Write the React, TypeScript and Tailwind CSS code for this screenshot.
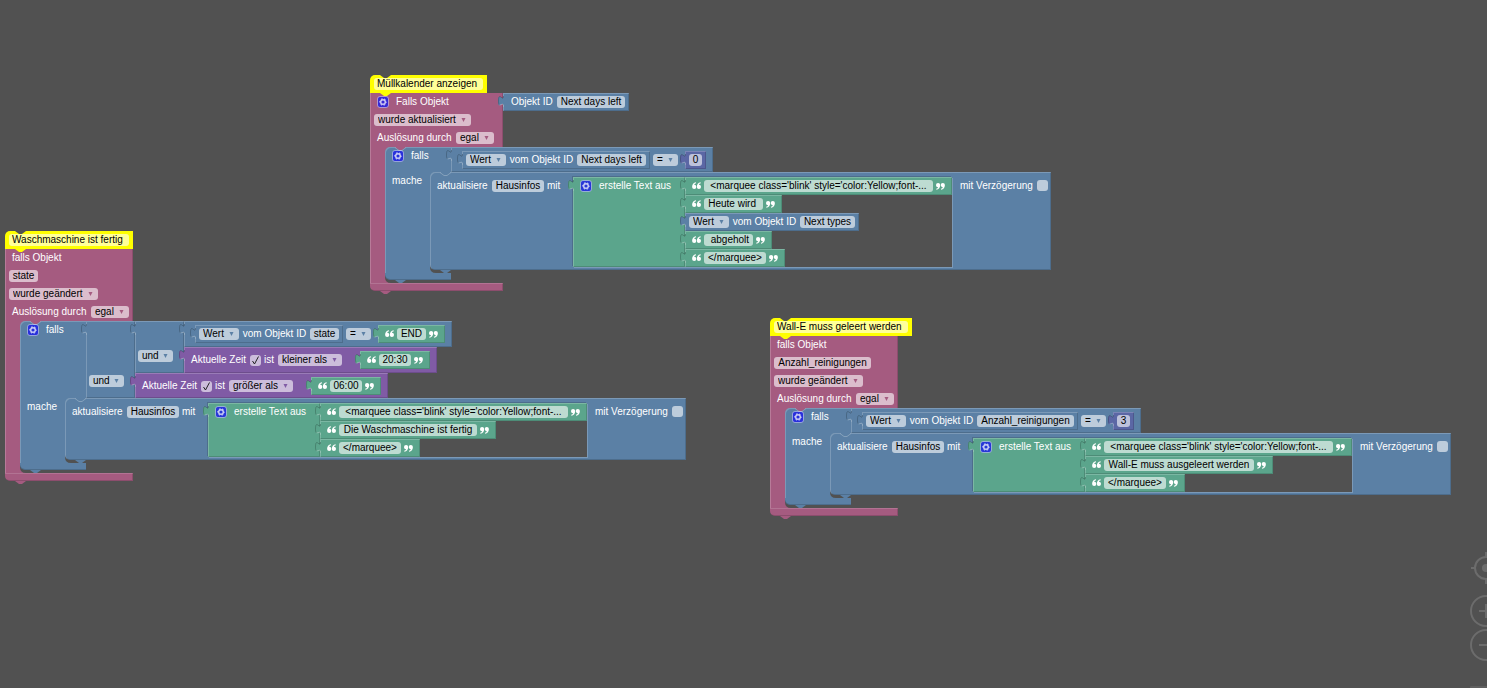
import type { ReactNode } from "react";
import { twMerge } from "tailwind-merge";

type Tone = "yellow" | "pink" | "blue" | "green" | "purple" | "indigo";

const bg: Record<Tone, string> = {
  yellow: "bg-[#ffff00]",
  pink: "bg-[#a55b80]",
  blue: "bg-[#5b80a5]",
  green: "bg-[#5ba58c]",
  purple: "bg-[#805ba5]",
  indigo: "bg-[#5b67a5]",
};

const fill: Record<Tone, string> = {
  yellow: "fill-[#ffff00]",
  pink: "fill-[#a55b80]",
  blue: "fill-[#5b80a5]",
  green: "fill-[#5ba58c]",
  purple: "fill-[#805ba5]",
  indigo: "fill-[#5b67a5]",
};

const bevel = "shadow-[inset_1px_1px_#ffffff33,inset_-1px_-1px_#00000026]";

/* shapes */

const Tab = ({ tone }: { tone: Tone }) => (
  <svg className="absolute top-[3px] -left-[5px] h-[11px] w-[7px]" viewBox="0 0 7 11">
    <path className={fill[tone]} d="M7 0H5.5c0 6.800-5.500-5.500-5.500 5.100s5.500-1.700 5.500 5.100H7z" />
    <path
      d="M5.500 0c0 6.800-5-5.500-5 5.100 0 2 .3 3.200 1 3.700"
      fill="none"
      stroke="#000"
      strokeOpacity=".2"
    />
    <path d="M1.500 8.800c1.500.6 4-2.500 4 1.800" fill="none" stroke="#fff" strokeOpacity=".3" />
  </svg>
);

const Notch = ({ className, line = true }: { className: string; line?: boolean }) => (
  <svg className={twMerge("absolute left-[10px] z-10 h-[4px] w-[11px]", className)} viewBox="0 0 11 4">
    <path d="M0 0 4 3H7L11 0z" />
    {line && <path d="M0 .5 4 3.500H7L11 .5" fill="none" stroke="#fff" strokeOpacity=".25" />}
  </svg>
);

const Quote = ({ close }: { close?: boolean }) => (
  <svg
    className={close ? "h-[8px] w-[9px] shrink-0 rotate-180" : "h-[8px] w-[9px] shrink-0"}
    viewBox="0 0 9 8"
    fill="#fff"
  >
    <path d="M3.900 .3C1.500 .6.1 2.500.1 5a2.100 2.100 0 1 0 2.200-2.200C2.300 2 3 1.500 4.100 1.300z" />
    <path d="M8.600 .3C6.200 .6 4.800 2.500 4.800 5a2.100 2.100 0 1 0 2.200-2.200C7 2 7.700 1.500 8.800 1.300z" />
  </svg>
);

/* fields */

const Text = ({ value, className }: { value: string; className: string }) => (
  <input
    type="text"
    aria-label="Wert"
    defaultValue={value}
    className={twMerge("h-3 min-w-0 shrink-0 rounded-[3px] bg-white/60 px-[2px] text-center leading-3 text-black outline-none", className)}
  />
);

const Select = ({ value, tone, className }: { value: string; tone: Tone; className: string }) => (
  <span className="relative flex shrink-0">
    <select
      aria-label="Auswahl"
      defaultValue={value}
      className={twMerge("h-3 appearance-none rounded-[3px] bg-white/60 pl-[4px] leading-3 text-black outline-none", className)}
    >
      <option>{value}</option>
    </select>
    <svg className={`pointer-events-none absolute top-[4px] right-[5px] h-[4px] w-[5px] ${fill[tone]}`} viewBox="0 0 5 4">
      <path d="M.5 0H4.500L2.500 4z" />
    </svg>
  </span>
);

const Check = ({ checked, label }: { checked?: boolean; label: string }) => (
  <span className="relative flex shrink-0">
    <input
      type="checkbox"
      aria-label={label}
      defaultChecked={checked}
      className="peer size-[11px] appearance-none rounded-[3px] bg-white/60"
    />
    <svg
      className="pointer-events-none absolute inset-0 hidden size-[11px] peer-checked:block"
      viewBox="0 0 11 11"
      fill="none"
      stroke="#222"
    >
      <path d="M2.500 6 4.500 9 8.500 1.500" />
    </svg>
  </span>
);

const Gear = () => (
  <button type="button" aria-label="Block anpassen" className="flex shrink-0">
    <svg className="size-3" viewBox="0 0 12 12">
      <rect
        x=".5"
        y=".5"
        width="11"
        height="11"
        rx="2.500"
        fill="#1c1ce8"
        fillOpacity=".8"
        stroke="#fff"
        strokeOpacity=".45"
      />
      <g fill="none" stroke="#fff" strokeOpacity=".75">
        <circle cx="6" cy="6" r="2.300" strokeWidth="1.400" />
        <circle cx="6" cy="6" r="3.300" strokeWidth="1" strokeDasharray="1.700 1.756" strokeDashoffset=".85" />
      </g>
    </svg>
  </button>
);

/* blocks */

const Value = ({ tone, className, children }: { tone: Tone; className?: string; children: ReactNode }) => (
  <div className={twMerge("relative flex h-[18px] shrink-0 items-center", bg[tone], bevel, className)}>
    <Tab tone={tone} />
    {children}
  </div>
);

const TextBlock = ({ value, width }: { value: string; width: string }) => (
  <Value tone="green" className="gap-[3px] px-[7px]">
    <Quote />
    <Text value={value} className={width} />
    <Quote close />
  </Value>
);

const ObjectValue = ({ id, width, className }: { id: string; width: string; className?: string }) => (
  <Value tone="blue" className={twMerge("gap-[3px] px-1", className)}>
    <Select value="Wert" tone="blue" className="w-[40px]" />
    <span className="w-[65px] text-center">vom Objekt ID</span>
    <Text value={id} className={width} />
  </Value>
);

const Compare = ({
  id,
  width,
  className,
  children,
}: {
  id: string;
  width: string;
  className?: string;
  children: ReactNode;
}) => (
  <Value tone="blue" className={twMerge("h-[25px] items-start gap-[3px] pt-1 pr-[7px] pl-[11px]", className)}>
    <ObjectValue id={id} width={width} />
    <span className="flex h-[17px] items-center pr-1">
      <Select value="=" tone="blue" className="w-[25px]" />
    </span>
    {children}
  </Value>
);

const TimeCheck = ({
  op,
  time,
  className,
}: {
  op: string;
  time: string;
  className?: string;
}) => (
  <Value tone="purple" className={twMerge("h-[25px] items-start pt-1 pr-[7px] pl-[7px]", className)}>
    <div className="flex h-[18px] items-center gap-[3px] pr-[18px]">
      <span className="w-[56px]">Aktuelle Zeit</span>
      <Check checked label="Aktuelle Zeit" />
      <span className="w-[11px]">ist</span>
      <Select value={op} tone="purple" className="w-[64px]" />
    </div>
    <TextBlock value={time} width="w-[32px]" />
  </Value>
);

const And = ({ children }: { children: ReactNode }) => (
  <div className="flex">
    <Value tone="blue" className="h-auto w-[49px] items-end pb-2 pl-[3px]">
      <span className="flex h-[18px] items-center">
        <Select value="und" tone="blue" className="w-[35px]" />
      </span>
    </Value>
    <div className="flex flex-col items-start">{children}</div>
  </div>
);

const Update = ({ children }: { children: ReactNode }) => (
  <div
    className={`relative flex items-start rounded-l-[5px] pt-[5px] pr-[3px] pb-[3px] pl-[7px] ${bg.blue} ${bevel}`}
  >
    <Notch className="top-0 fill-[#5b80a5]" />
    <div className="flex h-[17px] w-[136px] items-center gap-[3px]">
      <span className="w-[52px]">aktualisiere</span>
      <Text value="Hausinfos" className="w-[52px]" />
      <span>mit</span>
    </div>
    <div className="flex bg-[#515151] shadow-[1px_1px_#ffffff33,-1px_-1px_#00000026]">
      <div className={`relative flex w-[112px] items-start ${bg.green} ${bevel}`}>
        <Tab tone="green" />
        <div className="flex h-[18px] items-center gap-[7px] pl-[7px]">
          <Gear />
          <span>erstelle Text aus</span>
        </div>
      </div>
      <div className="flex flex-col items-start">{children}</div>
    </div>
    <label className="flex h-[17px] items-center gap-[3px] pl-2">
      <span className="w-[74px]">mit Verzögerung</span>
      <Check label="mit Verzögerung" />
    </label>
    <Notch className="top-full fill-[#5b80a5]" line={false} />
  </div>
);

const Mouth = ({ tone, children }: { tone: Tone; children: ReactNode }) => (
  <div className="relative pb-[3px]">
    <span className={`absolute top-0 left-0 size-[5px] ${bg[tone]}`} />
    <svg className={`absolute bottom-0 left-0 size-[6px] ${fill[tone]}`} viewBox="0 0 6 6">
      <path d="M0 0Q0 6 6 6H0z" />
    </svg>
    {children}
  </div>
);

const If = ({ condition, children }: { condition: ReactNode; children: ReactNode }) => (
  <div className="relative flex flex-col items-start">
    <Notch className="top-0 fill-[#a55b80]" />
    <div className="flex">
      <div className={`w-[66px] rounded-tl-[5px] shadow-[inset_1px_1px_#ffffff33] ${bg.blue}`}>
        <div className="flex h-[18px] items-center gap-[7px] pl-[7px]">
          <Gear />
          <span>falls</span>
        </div>
      </div>
      {condition}
    </div>
    <div className="flex">
      <div className={`w-[45px] shadow-[inset_1px_0_#ffffff33] ${bg.blue}`}>
        <div className="flex h-[18px] items-center pl-[7px]">mache</div>
      </div>
      <Mouth tone="blue">{children}</Mouth>
    </div>
    <div className={`h-[7px] w-[66px] rounded-bl-[5px] shadow-[inset_0_-1px_#00000026] ${bg.blue}`} />
    <Notch className="top-full fill-[#5b80a5]" line={false} />
  </div>
);

const Comment = ({ value, width }: { value: string; width: string }) => (
  <div className={`relative flex h-[18px] items-center rounded-tl-[5px] px-1 ${bg.yellow}`}>
    <Notch className="top-0 fill-[#515151]" line={false} />
    <Text value={value} className={twMerge("pl-[3px] text-left", width)} />
    <Notch className="top-full fill-[#ffff00]" line={false} />
  </div>
);

const Row = ({ children }: { children: ReactNode }) => (
  <div className="flex h-[18px] items-center px-1">{children}</div>
);

const Trigger = ({
  className,
  comment,
  head,
  side,
  width,
  children,
}: {
  className: string;
  comment: ReactNode;
  head: ReactNode;
  side?: ReactNode;
  width: string;
  children: ReactNode;
}) => (
  <section className={twMerge("absolute flex flex-col items-start", className)}>
    {comment}
    <div className="flex items-start">
      <div className={`${width} ${bg.pink} shadow-[inset_1px_0_#ffffff33,inset_-1px_0_#00000026]`}>
        {head}
        <Row>
          <label className="flex items-center gap-[3px] pl-[3px]">
            <span className="w-[76px]">Auslösung durch</span>
            <Select value="egal" tone="pink" className="w-[38px]" />
          </label>
        </Row>
      </div>
      {side}
    </div>
    <div className="flex">
      <div className={`w-[15px] shadow-[inset_1px_0_#ffffff33] ${bg.pink}`} />
      <Mouth tone="pink">{children}</Mouth>
    </div>
    <div
      className={`relative h-2 rounded-bl-[5px] shadow-[inset_0_1px_#ffffff26,inset_-1px_-1px_#00000026] ${bg.pink} ${width}`}
    >
      <Notch className="top-full fill-[#a55b80]" line={false} />
    </div>
  </section>
);

const marquee = "<marquee class='blink' style='color:Yellow;font-...";

const ZoomControls = () => (
  <div className="absolute -right-[15px] bottom-[27px] flex w-8 flex-col items-center text-[#6c6c6c]">
    <button type="button" aria-label="Zentrieren" className="mb-[11px]">
      <svg className="size-8" viewBox="0 0 32 32" fill="none" stroke="currentColor" strokeWidth="2">
        <circle cx="16" cy="16" r="11" />
        <circle cx="16" cy="16" r="4" fill="currentColor" stroke="none" />
        <path d="M16 0v5M16 27v5M1 16h4M27 16h4" />
      </svg>
    </button>
    <button type="button" aria-label="Vergrößern" className="mb-[2px]">
      <svg className="size-8" viewBox="0 0 32 32" fill="none" stroke="currentColor" strokeWidth="2">
        <circle cx="16" cy="16" r="15" />
        <path d="M9 16h14M16 9v14" />
      </svg>
    </button>
    <button type="button" aria-label="Verkleinern">
      <svg className="size-8" viewBox="0 0 32 32" fill="none" stroke="currentColor" strokeWidth="2">
        <circle cx="16" cy="16" r="15" />
        <path d="M9 16h14" />
      </svg>
    </button>
  </div>
);

export default function App() {
  return (
    <main className="relative min-h-screen w-full overflow-hidden bg-[#515151] font-['Liberation_Sans',Arial,sans-serif] text-[10px] leading-3 whitespace-nowrap text-white">
      <Trigger
        className="top-[75px] left-[370px]"
        width="w-[133px]"
        comment={<Comment value="Müllkalender anzeigen" width="w-[109px]" />}
        side={
          <Value tone="blue" className="gap-[3px] pr-1 pl-2">
            <span className="w-[43px]">Objekt ID</span>
            <Text value="Next days left" className="w-[68px]" />
          </Value>
        }
        head={
          <>
            <Row>
              <div className="flex items-center gap-[7px] pl-[3px]">
                <Gear />
                <span>Falls Objekt</span>
              </div>
            </Row>
            <Row>
              <Select value="wurde aktualisiert" tone="pink" className="w-[97px]" />
            </Row>
          </>
        }
      >
        <If
          condition={
            <Compare id="Next days left" width="w-[69px]">
              <Value tone="indigo" className="px-1">
                <Text value="0" className="w-[13px]" />
              </Value>
            </Compare>
          }
        >
          <Update>
            <TextBlock value={marquee} width="w-[229px]" />
            <TextBlock value="Heute wird " width="w-[59px]" />
            <ObjectValue id="Next types" width="w-[55px]" />
            <TextBlock value=" abgeholt" width="w-[49px]" />
            <TextBlock value="</marquee>" width="w-[62px]" />
          </Update>
        </If>
      </Trigger>

      <Trigger
        className="top-[231px] left-[5px]"
        width="w-[128px]"
        comment={<Comment value="Waschmaschine ist fertig" width="w-[120px]" />}
        head={
          <>
            <Row>
              <span className="pl-[3px]">falls Objekt</span>
            </Row>
            <Row>
              <Text value="state" className="w-[29px]" />
            </Row>
            <Row>
              <Select value="wurde geändert" tone="pink" className="w-[89px]" />
            </Row>
          </>
        }
      >
        <If
          condition={
            <And>
              <And>
                <Compare id="state" width="w-[29px]" className="h-[26px]">
                  <TextBlock value="END" width="w-[29px]" />
                </Compare>
                <TimeCheck op="kleiner als" time="20:30" className="h-[26px]" />
              </And>
              <TimeCheck op="größer als" time="06:00" />
            </And>
          }
        >
          <Update>
            <TextBlock value={marquee} width="w-[229px]" />
            <TextBlock value="Die Waschmaschine ist fertig" width="w-[138px]" />
            <TextBlock value="</marquee>" width="w-[62px]" />
          </Update>
        </If>
      </Trigger>

      <Trigger
        className="top-[318px] left-[770px]"
        width="w-[128px]"
        comment={<Comment value="Wall-E muss geleert werden" width="w-[134px]" />}
        head={
          <>
            <Row>
              <span className="pl-[3px]">falls Objekt</span>
            </Row>
            <Row>
              <Text value="Anzahl_reinigungen" className="w-[97px]" />
            </Row>
            <Row>
              <Select value="wurde geändert" tone="pink" className="w-[89px]" />
            </Row>
          </>
        }
      >
        <If
          condition={
            <Compare id="Anzahl_reinigungen" width="w-[97px]">
              <Value tone="indigo" className="px-1">
                <Text value="3" className="w-[13px]" />
              </Value>
            </Compare>
          }
        >
          <Update>
            <TextBlock value={marquee} width="w-[229px]" />
            <TextBlock value="Wall-E muss ausgeleert werden" width="w-[150px]" />
            <TextBlock value="</marquee>" width="w-[62px]" />
          </Update>
        </If>
      </Trigger>

      <ZoomControls />
      <div className="absolute right-0 bottom-0 h-[2px] w-[17px] rounded-tl-[1px] bg-[#606060]" />
    </main>
  );
}
